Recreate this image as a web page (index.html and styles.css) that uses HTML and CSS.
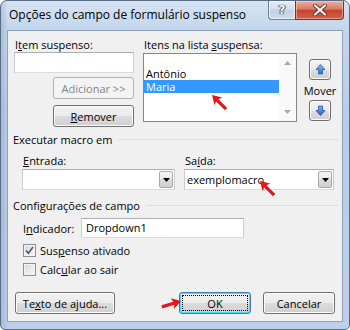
FILE: index.html
```html
<!DOCTYPE html>
<html lang="pt">
<head>
<meta charset="utf-8">
<title>Opções do campo de formulário suspenso</title>
<link rel="stylesheet" href="styles.css">
</head>
<body>
<div class="window">
  <div class="titlebar">
    <span class="title">Opções do campo de formulário suspenso</span>
    <div class="caps">
      <div class="cap help"><span>?</span></div>
      <div class="cap close">
        <svg width="14" height="12" viewBox="0 0 14 12"><path d="M2 1.5 L12 10.5 M12 1.5 L2 10.5" stroke="#6b2a22" stroke-width="4" stroke-linecap="round"/><path d="M2 1.5 L12 10.5 M12 1.5 L2 10.5" stroke="#fff" stroke-width="2.2" stroke-linecap="round"/></svg>
      </div>
    </div>
  </div>
  <div class="client">
    <div class="top">
      <div class="col-left">
        <div class="lbl">I<u>t</u>em suspenso:</div>
        <div class="textbox item-input"></div>
        <div class="btn disabled add-btn">Adicionar &gt;&gt;</div>
        <div class="btn rem-btn"><span><u>R</u>emover</span></div>
      </div>
      <div class="col-mid">
        <div class="lbl">Itens na lista <u>s</u>uspensa:</div>
        <div class="listbox">
          <div class="items">
            <div class="item">&nbsp;</div>
            <div class="item"><span class="itxt">Antônio</span></div>
            <div class="item sel"><span class="itxt">Maria</span></div>
          </div>
          <div class="vscroll">
            <svg width="7" height="4" viewBox="0 0 7 4"><path d="M0 4 L3.5 0 L7 4 Z" fill="#a8a8a8"/></svg>
            <svg width="7" height="4" viewBox="0 0 7 4"><path d="M0 0 L3.5 4 L7 0 Z" fill="#a8a8a8"/></svg>
          </div>
        </div>
      </div>
      <div class="col-right">
        <div class="btn sbtn">
          <svg width="11" height="11" viewBox="0 0 11 11"><defs><linearGradient id="ga" x1="0" y1="0" x2="0" y2="1"><stop offset="0" stop-color="#7fc0f5"/><stop offset="1" stop-color="#2a6fc9"/></linearGradient></defs><path d="M5.5 0.5 L10 5.5 H7.5 V10 H3.5 V5.5 H1 Z" fill="url(#ga)" stroke="#2b5fa6" stroke-width="0.8" stroke-linejoin="round"/></svg>
        </div>
        <div class="mover">Mover</div>
        <div class="btn sbtn">
          <svg width="11" height="11" viewBox="0 0 11 11"><defs><linearGradient id="gb" x1="0" y1="0" x2="0" y2="1"><stop offset="0" stop-color="#7fb0f5"/><stop offset="1" stop-color="#2a5fc9"/></linearGradient></defs><path d="M5.5 10.5 L10 5.5 H7.5 V1 H3.5 V5.5 H1 Z" fill="url(#gb)" stroke="#2b4fa6" stroke-width="0.8" stroke-linejoin="round"/></svg>
        </div>
      </div>
    </div>

    <div class="group-hd">Executar macro em</div>
    <div class="macro">
      <div class="field entrada">
        <div class="lbl"><u>E</u>ntrada:</div>
        <div class="combo"><span class="val"></span><span class="drop"><svg width="7" height="4" viewBox="0 0 7 4"><path d="M0 0 L3.5 4 L7 0 Z" fill="#000"/></svg></span></div>
      </div>
      <div class="field saida">
        <div class="lbl">Sa<u>í</u>da:</div>
        <div class="combo"><span class="val">exemplomacro</span><span class="drop"><svg width="7" height="4" viewBox="0 0 7 4"><path d="M0 0 L3.5 4 L7 0 Z" fill="#000"/></svg></span></div>
      </div>
    </div>

    <div class="group-hd">Configurações de campo</div>
    <div class="settings">
      <div class="ind-row">
        <span class="ind-lbl">I<u>n</u>dicador:</span>
        <div class="textbox ind-input">Dropdown1</div>
      </div>
      <div class="chk">
        <span class="box"><svg width="9" height="9" viewBox="0 0 9 9"><path d="M1 4.5 L3.5 7.2 L8 1" fill="none" stroke="#4a5f8a" stroke-width="1.8"/></svg></span>
        <span>Sus<u>p</u>enso ativado</span>
      </div>
      <div class="chk">
        <span class="box"></span>
        <span>Calc<u>u</u>lar ao sair</span>
      </div>
    </div>

    <div class="footer">
      <div class="btn help-btn"><span>Te<u>x</u>to de ajuda...</span></div>
      <div class="btn ok-btn"><span class="focus">OK</span></div>
      <div class="btn cancel-btn">Cancelar</div>
    </div>
  </div>

  <svg class="annot" width="350" height="330" viewBox="0 0 350 330">
    <g fill="#e8141b">
      <polygon transform="translate(212 95) rotate(225)" points="0,0 -9,-5.5 -7.5,-1.6 -20,-1.6 -20,1.6 -7.5,1.6 -9,5.5"/>
      <polygon transform="translate(260 181) rotate(225)" points="0,0 -9,-5.5 -7.5,-1.6 -20,-1.6 -20,1.6 -7.5,1.6 -9,5.5"/>
      <polygon transform="translate(181 301) rotate(-17)" points="0,0 -9,-5.5 -7.5,-1.6 -20,-1.6 -20,1.6 -7.5,1.6 -9,5.5"/>
    </g>
  </svg>
</div>
</body>
</html>
```

FILE: styles.css
```css
html, body {
  margin: 0;
  padding: 0;
  background: #ffffff;
}

.window {
  position: relative;
  box-sizing: border-box;
  width: 350px;
  height: 330px;
  border: 1px solid #5a6c84;
  border-radius: 7px 7px 5px 5px;
  background:
    linear-gradient(to right, rgba(120,146,180,0.35) 0px, rgba(120,146,180,0) 7px),
    linear-gradient(to bottom, #d6e4f3 0px, #c3d6ec 28px, #b9cde6 120px, #bdd0e8 330px);
  font-family: "Open Sans", "Noto Sans", sans-serif;
  font-size: 11px;
  color: #000;
  overflow: hidden;
}

.titlebar {
  display: flex;
  align-items: flex-start;
  height: 29px;
}

.title {
  padding: 5px 0 0 8px;
  font-size: 12px;
  line-height: 18px;
  color: #000;
  flex: 1;
}

.caps {
  display: flex;
  margin-right: 5px;
}

.cap {
  box-sizing: border-box;
  height: 19px;
  display: flex;
  align-items: center;
  justify-content: center;
  border: 1px solid #6d7f97;
  border-top: none;
}

.cap.help {
  width: 27px;
  border-right: none;
  border-radius: 0 0 0 4px;
  background: linear-gradient(to bottom, #e6edf6 0%, #d3dfec 45%, #c2d2e5 50%, #cddbeb 100%);
  box-shadow: inset 0 0 0 1px rgba(255,255,255,0.6);
}

.cap.help span {
  font-family: "DejaVu Sans", sans-serif;
  font-size: 12px;
  font-weight: bold;
  color: #f4f7fb;
  text-shadow: 0 0 1px #38485e, 0 0 1px #38485e, 1px 0 0 #4a5b72, -1px 0 0 #4a5b72;
}

.cap.close {
  width: 49px;
  border-radius: 0 0 4px 0;
  border-color: #7a2d24;
  background: linear-gradient(to bottom, #ebb0a3 0%, #d97a66 45%, #c8432c 52%, #d2614a 100%);
  box-shadow: inset 0 0 0 1px rgba(255,220,210,0.5);
}

.client {
  box-sizing: border-box;
  margin-left: 6px;
  width: 336px;
  height: 292px;
  border: 1px solid #8ea2bb;
  background: #f0f0f0;
}

.lbl {
  line-height: 15px;
  white-space: nowrap;
}

/* top section */
.top {
  display: flex;
  padding: 6px 0 0 6px;
  height: 90px;
}

.col-left {
  width: 120px;
  display: flex;
  flex-direction: column;
  align-items: flex-end;
}

.col-left .lbl {
  align-self: flex-start;
  padding-left: 1px;
}

.textbox {
  box-sizing: border-box;
  background: #fff;
  border: 1px solid;
  border-color: #abadb3 #c9ccd3 #d7dbe2 #c9ccd3;
}

.item-input {
  width: 120px;
  height: 21px;
}

.btn {
  box-sizing: border-box;
  height: 22px;
  border: 1px solid #707070;
  border-radius: 3px;
  background: linear-gradient(to bottom, #f2f2f2 0%, #ebebeb 50%, #dddddd 50%, #cfcfcf 100%);
  box-shadow: inset 0 0 0 1px #fbfbfb;
  display: flex;
  align-items: center;
  justify-content: center;
  white-space: nowrap;
}

.btn.disabled {
  border-color: #adb2b5;
  background: #f4f4f4;
  box-shadow: none;
  color: #838383;
}

.add-btn {
  width: 81px;
  margin-top: 4px;
}

.rem-btn {
  width: 81px;
  margin-top: 6px;
}

.col-mid {
  margin-left: 9px;
  width: 154px;
}

.col-mid .lbl {
  padding-left: 1px;
}

.listbox {
  box-sizing: border-box;
  margin-top: 1px;
  height: 69px;
  border: 1px solid #828790;
  background: #fff;
  display: flex;
}

.items {
  flex: 1;
}

.item {
  height: 13px;
  padding-left: 2px;
  overflow: hidden;
  display: flex;
  align-items: center;
}

.itxt {
  line-height: 11px;
}

.item.sel {
  background: #3399ff;
  color: #fff;
}

.vscroll {
  width: 17px;
  background: #f9f9f9;
  display: flex;
  flex-direction: column;
  justify-content: space-between;
  align-items: center;
  padding: 7px 0 7px;
  box-sizing: border-box;
}

.col-right {
  margin-left: 8px;
  width: 30px;
  display: flex;
  flex-direction: column;
  align-items: center;
  padding-top: 22px;
}

.sbtn {
  width: 22px;
  height: 21px;
}

.mover {
  line-height: 15px;
  margin: 3px 0 2px;
}

/* group headers */
.group-hd {
  display: flex;
  align-items: center;
  padding: 0 4px 0 5px;
  line-height: 15px;
  margin-top: 5px;
}

.group-hd::after {
  content: "";
  flex: 1;
  border-top: 1px solid #d5dfe5;
  margin-left: 6px;
}

.macro {
  display: flex;
  padding: 6px 0 0 14px;
}

.field .lbl {
  padding-left: 1px;
  margin-bottom: 1px;
}

.entrada .combo {
  width: 153px;
}

.saida {
  margin-left: 9px;
}

.saida .combo {
  width: 150px;
}

.combo {
  box-sizing: border-box;
  height: 21px;
  background: #fff;
  border: 1px solid;
  border-color: #abadb3 #c9ccd3 #d7dbe2 #c9ccd3;
  display: flex;
  align-items: center;
  padding: 1px;
}

.combo .val {
  flex: 1;
  padding-left: 1px;
  font-size: 11px;
}

.combo .drop {
  box-sizing: border-box;
  width: 14px;
  height: 17px;
  border: 1px solid #a7abb0;
  border-radius: 2px;
  background: linear-gradient(to bottom, #f4f4f4 0%, #e9e9e9 50%, #dadada 50%, #d0d0d0 100%);
  display: flex;
  align-items: center;
  justify-content: center;
}

.macro + .group-hd {
  margin-top: 8px;
}

.settings {
  padding-left: 14px;
}

.ind-row {
  display: flex;
  align-items: center;
  margin-top: 5px;
}

.ind-lbl {
  width: 58px;
  padding-left: 1px;
}

.ind-input {
  width: 163px;
  height: 20px;
  line-height: 18px;
  padding-left: 4px;
}

.chk {
  display: flex;
  align-items: center;
  height: 19px;
  padding-left: 1px;
}

.ind-row + .chk {
  margin-top: 3px;
}

.chk .box {
  box-sizing: border-box;
  width: 13px;
  height: 13px;
  border: 1px solid #8e8f8f;
  background: linear-gradient(135deg, #d6d6d6 0%, #ececec 60%, #f8f8f8 100%);
  box-shadow: inset 0 0 0 1px #f4f4f4;
  display: flex;
  align-items: center;
  justify-content: center;
  margin-right: 4px;
}

.footer {
  display: flex;
  padding: 0 7px 0 7px;
  margin-top: 13px;
}

.help-btn {
  width: 100px;
}

.ok-btn {
  width: 72px;
  margin-left: auto;
  border-color: #3c7fb1;
  box-shadow: inset 0 0 0 1px #48d8fb;
}

.ok-btn .focus {
  box-sizing: border-box;
  width: 66px;
  height: 16px;
  border: 1px dotted #000;
  display: flex;
  align-items: center;
  justify-content: center;
}

.cancel-btn {
  width: 72px;
  margin-left: 12px;
}

.annot {
  position: absolute;
  left: -1px;
  top: -1px;
  pointer-events: none;
}
```
